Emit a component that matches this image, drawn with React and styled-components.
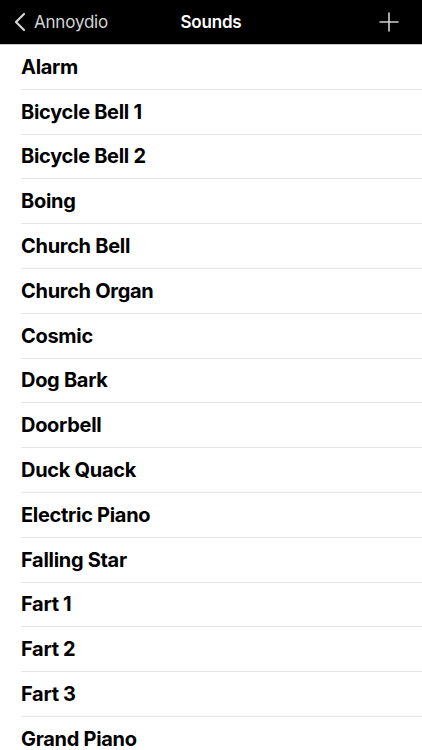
import React from 'react';
import styled, { createGlobalStyle } from 'styled-components';

const sounds = [
    'Alarm',
    'Bicycle Bell 1',
    'Bicycle Bell 2',
    'Boing',
    'Church Bell',
    'Church Organ',
    'Cosmic',
    'Dog Bark',
    'Doorbell',
    'Duck Quack',
    'Electric Piano',
    'Falling Star',
    'Fart 1',
    'Fart 2',
    'Fart 3',
    'Grand Piano',
];

const Global = createGlobalStyle`
  html, body {
    margin: 0;
    padding: 0;
    background: #fff;
    font-family: Inter, "Noto Sans", "Liberation Sans", sans-serif;
    -webkit-font-smoothing: antialiased;
  }
`;

const Chevron = () => (
    <svg width="13" height="20" viewBox="0 0 13 20" fill="none">
        <path d="M11 2 L3 10 L11 18" stroke="#d6d6d6" strokeWidth="2.2" strokeLinecap="round" strokeLinejoin="round" />
    </svg>
);

const Plus = () => (
    <svg width="20" height="20" viewBox="0 0 20 20" fill="none">
        <path d="M10 1 V19 M1 10 H19" stroke="#d0d0d0" strokeWidth="1.6" strokeLinecap="round" />
    </svg>
);

export default function App() {
    return (
        <Screen>
            <Global />
            <NavBar>
                <BackButton>
                    <Chevron />
                    <BackLabel>Annoydio</BackLabel>
                </BackButton>
                <Title>Sounds</Title>
                <AddButton>
                    <Plus />
                </AddButton>
            </NavBar>
            <List>
                {sounds.map(name => (
                    <Row key={name}>
                        <RowLabel>{name}</RowLabel>
                    </Row>
                ))}
            </List>
        </Screen>
    );
}

const Screen = styled.div`
  width: 422px;
  height: 750px;
  overflow: hidden;
  background: #fff;
`;

const NavBar = styled.div`
  height: 44px;
  background: #000;
  display: grid;
  grid-template-columns: 1fr auto 1fr;
  align-items: center;
  border-bottom: 1px solid #c8c8c8;
`;

const BackButton = styled.div`
  display: flex;
  align-items: center;
  gap: 8px;
  padding-left: 13px;
`;

const BackLabel = styled.span`
  color: #d4d4d4;
  font-size: 17px;
  letter-spacing: -0.2px;
`;

const Title = styled.span`
  color: #fff;
  font-size: 17px;
  font-weight: 600;
  letter-spacing: -0.2px;
`;

const AddButton = styled.div`
  display: flex;
  justify-content: flex-end;
  padding-right: 23px;
`;

const List = styled.div`
  display: flex;
  flex-direction: column;
`;

const Row = styled.div`
  height: 44.8px;
  box-sizing: border-box;
  margin-left: 21px;
  display: flex;
  align-items: center;
  border-bottom: 1px solid #e6e6e6;
`;

const RowLabel = styled.span`
  color: #000;
  font-size: 20px;
  font-weight: 700;
  letter-spacing: -0.3px;
`;
